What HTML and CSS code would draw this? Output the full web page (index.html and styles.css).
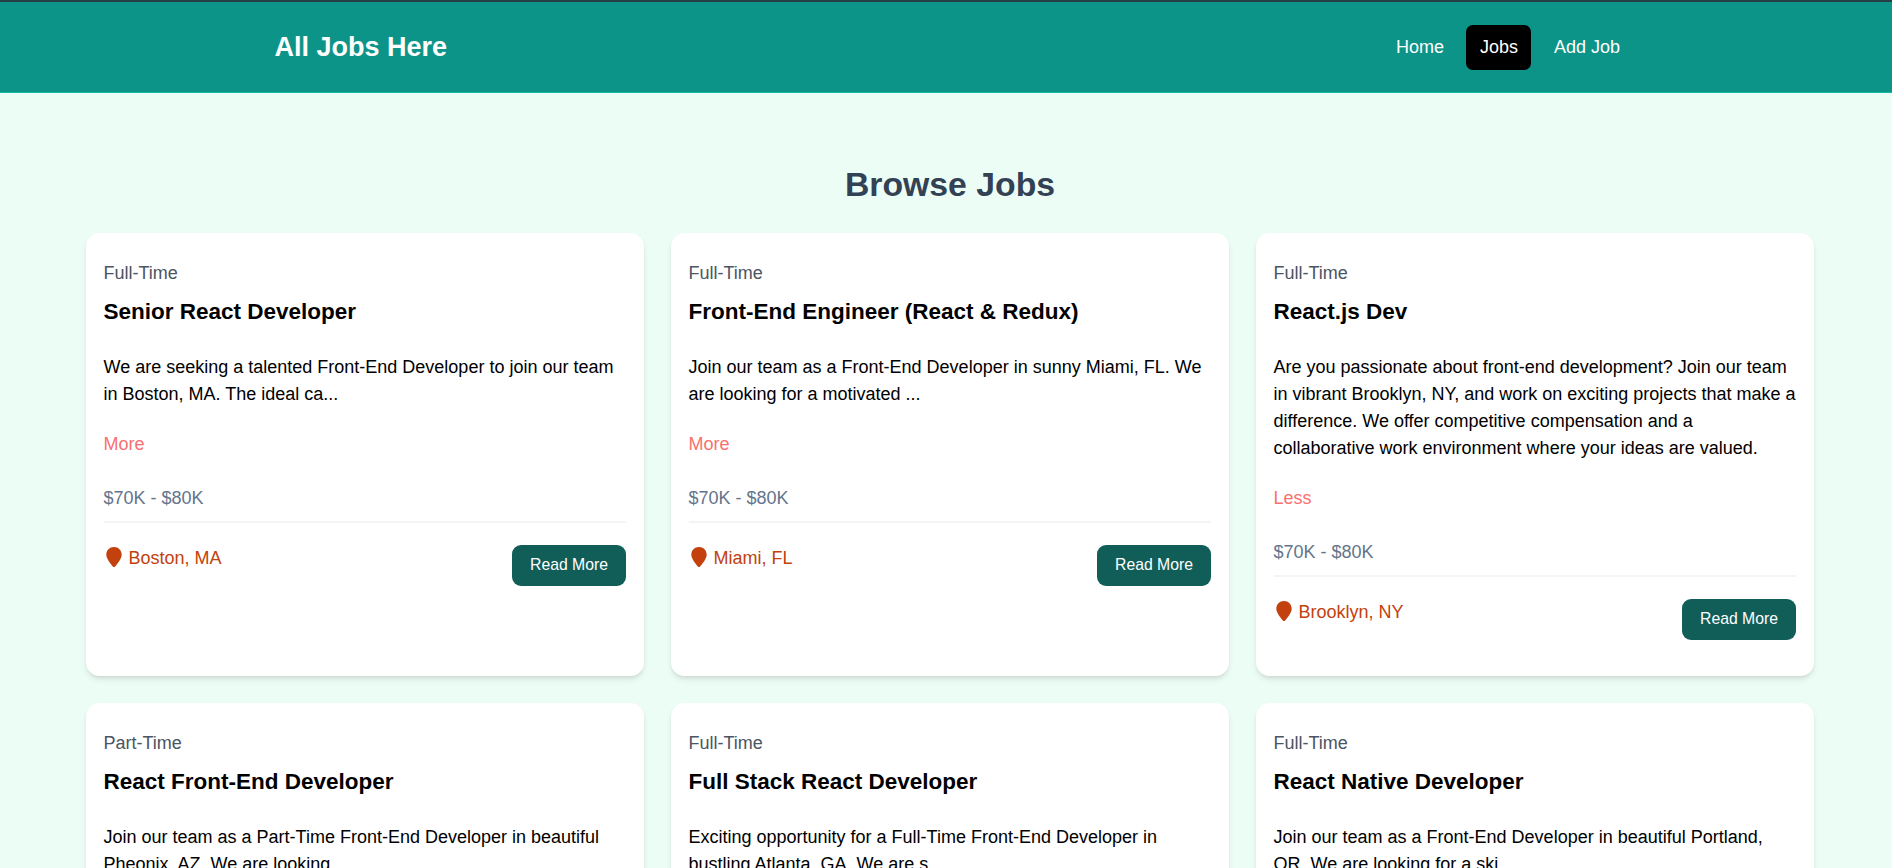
FILE: index.html
```html
<!DOCTYPE html>
<html lang="en">
<head>
<meta charset="utf-8">
<title>All Jobs Here</title>
<link rel="stylesheet" href="styles.css">
</head>
<body>
<svg class="sprite" aria-hidden="true">
  <symbol id="pin" viewBox="0 0 16 20"><path d="M8 0C3.600 0 .3 3.400.3 7.700.3 11.600 4.300 16.300 7.100 19.700Q8 20.400 8.900 19.700C11.700 16.300 15.700 11.600 15.700 7.700 15.700 3.400 12.400 0 8 0Z"/></symbol>
</svg>
<header class="navbar">
  <div class="navbar-inner">
    <a class="brand">All Jobs Here</a>
    <nav class="nav-links">
      <a class="nav-link">Home</a>
      <a class="nav-link active">Jobs</a>
      <a class="nav-link">Add Job</a>
    </nav>
  </div>
</header>
<main class="jobs">
  <h1 class="heading">Browse Jobs</h1>
  <div class="grid">
    <article class="card">
      <p class="type">Full-Time</p>
      <h2 class="title">Senior React Developer</h2>
      <p class="description">We are seeking a talented Front-End Developer to join our team in Boston, MA. The ideal ca...</p>
      <button class="toggle">More</button>
      <p class="salary">$70K - $80K</p>
      <div class="divider"></div>
      <div class="card-footer"><span class="location"><svg class="pin"><use href="#pin"/></svg>Boston, MA</span><a class="read-more">Read More</a></div>
    </article>
    <article class="card">
      <p class="type">Full-Time</p>
      <h2 class="title">Front-End Engineer (React &amp; Redux)</h2>
      <p class="description">Join our team as a Front-End Developer in sunny Miami, FL. We are looking for a motivated ...</p>
      <button class="toggle">More</button>
      <p class="salary">$70K - $80K</p>
      <div class="divider"></div>
      <div class="card-footer"><span class="location"><svg class="pin"><use href="#pin"/></svg>Miami, FL</span><a class="read-more">Read More</a></div>
    </article>
    <article class="card">
      <p class="type">Full-Time</p>
      <h2 class="title">React.js Dev</h2>
      <p class="description">Are you passionate about front-end development? Join our team in vibrant Brooklyn, NY, and work on exciting projects that make a difference. We offer competitive compensation and a collaborative work environment where your ideas are valued.</p>
      <button class="toggle">Less</button>
      <p class="salary">$70K - $80K</p>
      <div class="divider"></div>
      <div class="card-footer"><span class="location"><svg class="pin"><use href="#pin"/></svg>Brooklyn, NY</span><a class="read-more">Read More</a></div>
    </article>
    <article class="card">
      <p class="type">Part-Time</p>
      <h2 class="title">React Front-End Developer</h2>
      <p class="description">Join our team as a Part-Time Front-End Developer in beautiful Pheonix, AZ. We are looking...</p>
    </article>
    <article class="card">
      <p class="type">Full-Time</p>
      <h2 class="title">Full Stack React Developer</h2>
      <p class="description">Exciting opportunity for a Full-Time Front-End Developer in bustling Atlanta, GA. We are s...</p>
    </article>
    <article class="card">
      <p class="type">Full-Time</p>
      <h2 class="title">React Native Developer</h2>
      <p class="description">Join our team as a Front-End Developer in beautiful Portland, OR. We are looking for a ski...</p>
    </article>
  </div>
</main>
</body>
</html>
```

FILE: styles.css
```css
* { box-sizing: border-box; margin: 0; padding: 0; }

html { font-size: 18px; }

body {
  height: 868px;
  overflow: hidden;
  background: #ecfdf5;
  color: #000;
  font-family: "Liberation Sans", Arial, sans-serif;
  line-height: 1.5;
}

.sprite { display: none; }

.navbar {
  height: 93px;
  padding-left: 7px;
  background: #0d9488;
  border-top: 2px solid #263f47;
  border-bottom: 1px solid #14b8a6;
}

.navbar-inner {
  display: flex;
  align-items: center;
  justify-content: space-between;
  width: 1368px;
  height: 90px;
  margin: 0 auto;
}

.brand {
  margin-left: 9px;
  color: #fff;
  font-size: 27px;
  font-weight: 700;
  line-height: 36px;
}

.nav-links { display: flex; gap: 9px; }

.nav-link {
  padding: 9px 13.5px;
  border-radius: 6.75px;
  color: #fff;
}

.nav-link.active { background: #000; }

.jobs { padding: 71px 0 0 8px; }

.heading {
  margin-bottom: 28.5px;
  color: #334155;
  font-size: 33.75px;
  line-height: 40.5px;
  text-align: center;
}

.grid {
  display: grid;
  grid-template-columns: repeat(3, 1fr);
  gap: 27px;
  width: 1728px;
  margin: 0 auto;
}

.card {
  padding: 27px 18px 36px 17.5px;
  border-radius: 13.5px;
  background: #fff;
  box-shadow: 0 4px 6px -1px rgba(0, 0, 0, .1), 0 2px 4px -2px rgba(0, 0, 0, .1);
}

.type { margin-bottom: 8.5px; color: #4b5563; }

.title {
  margin-bottom: 27px;
  font-size: 22.5px;
  line-height: 31.5px;
}

.description { margin-bottom: 23px; }

.toggle {
  display: block;
  margin-bottom: 27px;
  border: 0;
  background: none;
  color: #f87171;
  font: inherit;
}

.salary { margin-bottom: 9px; color: #64748b; }

.divider {
  height: 2px;
  margin-bottom: 22px;
  background: #f3f4f6;
}

.card-footer {
  display: flex;
  align-items: flex-start;
  justify-content: space-between;
}

.location { display: flex; color: #c2410c; }

.pin {
  width: 16px;
  height: 20px;
  margin: 2px 6.5px 0 2.5px;
  fill: currentColor;
}

.read-more {
  height: 41px;
  padding: 9px 18px;
  border-radius: 9px;
  background: #115e59;
  color: #fff;
  font-size: 15.75px;
  line-height: 22.5px;
}
```
